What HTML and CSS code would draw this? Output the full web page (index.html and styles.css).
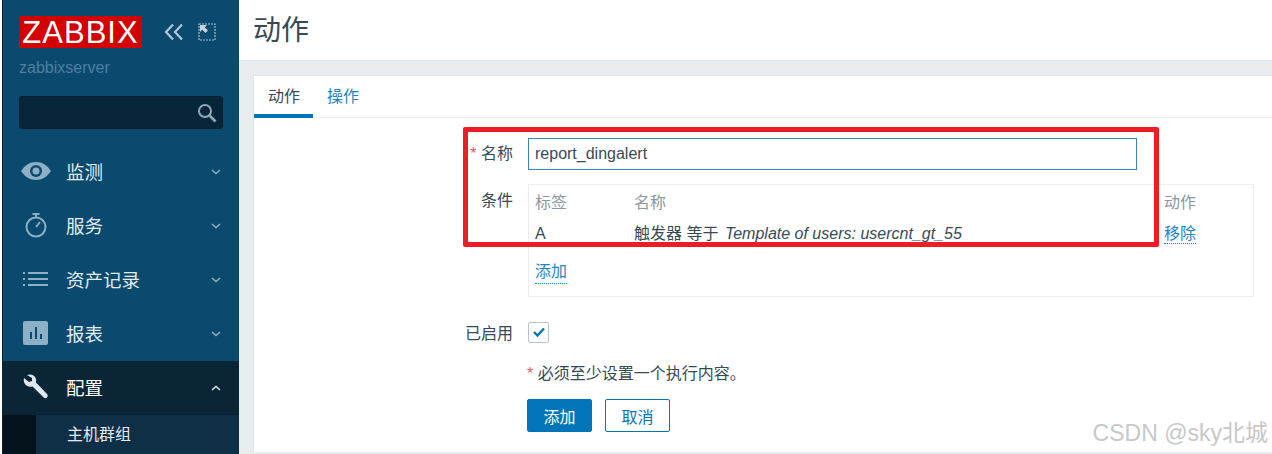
FILE: index.html
```html
<!DOCTYPE html>
<html lang="zh">

<head>
  <meta charset="UTF-8">
  <title>动作</title>
  <link rel="stylesheet" href="styles.css">
</head>

<body>
  <div class="page">
    <aside class="sidebar">
      <div class="logo-row">
        <span class="logo">ZABBIX</span>
        <svg class="collapse" width="20" height="18" viewBox="0 0 20 18"><path d="M9 1.500 2 9l7 7.500M18 1.500 11 9l7 7.500" fill="none" stroke="#b4c6d2" stroke-width="2.200"/></svg>
        <svg class="expand" width="18" height="18" viewBox="0 0 18 18"><path d="M1 1h16v16H1z" fill="none" stroke="#a9bdca" stroke-width="1.200" stroke-dasharray="2 1"/><path d="M2 2h7L6.800 4.200 10 7.500 7.500 10 4.200 6.800 2 9z" fill="#c3d2dc"/></svg>
      </div>
      <div class="server">zabbixserver</div>
      <div class="search">
        <svg width="20" height="20" viewBox="0 0 20 20"><circle cx="8" cy="8" r="6" fill="none" stroke="#8fa9ba" stroke-width="2"/><path d="m12.500 12.500 6 6" stroke="#8fa9ba" stroke-width="2.600"/></svg>
      </div>
      <nav class="menu">
        <div class="menu-item">
          <svg class="menu-icon" width="30" height="20" viewBox="0 0 30 20"><path d="M0 10C4 4 9 1 15 1s11 3 15 9c-4 6-9 9-15 9S4 16 0 10z" fill="#8db0c6"/><circle cx="15" cy="10" r="6" fill="#0a4a6e"/><circle cx="15" cy="10" r="3.500" fill="#8db0c6"/></svg>
          <span>监测</span>
          <svg class="chevron" width="10" height="6" viewBox="0 0 10 6"><path d="m1 1 4 3.500L9 1" fill="none" stroke="#8db0c6" stroke-width="1.500"/></svg>
        </div>
        <div class="menu-item">
          <svg class="menu-icon" width="30" height="26" viewBox="0 0 30 26"><circle cx="15" cy="15" r="9.500" fill="none" stroke="#8db0c6" stroke-width="2"/><path d="M11.500 2h7M15 2v3" stroke="#8db0c6" stroke-width="2"/><path d="m15 15 4-5" stroke="#8db0c6" stroke-width="2"/></svg>
          <span>服务</span>
          <svg class="chevron" width="10" height="6" viewBox="0 0 10 6"><path d="m1 1 4 3.500L9 1" fill="none" stroke="#8db0c6" stroke-width="1.500"/></svg>
        </div>
        <div class="menu-item">
          <svg class="menu-icon" width="30" height="16" viewBox="0 0 30 16"><path d="M2 1h2v2H2zM2 7h2v2H2zM2 13h2v2H2z" fill="#8db0c6"/><path d="M7 2h20M7 8h20M7 14h20" stroke="#8db0c6" stroke-width="2"/></svg>
          <span>资产记录</span>
          <svg class="chevron" width="10" height="6" viewBox="0 0 10 6"><path d="m1 1 4 3.500L9 1" fill="none" stroke="#8db0c6" stroke-width="1.500"/></svg>
        </div>
        <div class="menu-item">
          <svg class="menu-icon" width="30" height="24" viewBox="0 0 30 24"><rect x="2" y="0" width="25" height="24" rx="2" fill="#8db0c6"/><path d="M9 11h2v7H9zM14 6h2v12h-2zM19 13h2v5h-2z" fill="#0a4a6e"/></svg>
          <span>报表</span>
          <svg class="chevron" width="10" height="6" viewBox="0 0 10 6"><path d="m1 1 4 3.500L9 1" fill="none" stroke="#8db0c6" stroke-width="1.500"/></svg>
        </div>
        <div class="menu-item active">
          <svg class="menu-icon" width="30" height="26" viewBox="0 0 30 26"><path d="M3 4 8 8l3-1 0-3-5-3c4-1.500 8 0 9 4 .3 1.200.2 2.300-.2 3.300L26 20c1 1.200 1 2.500 0 3.500s-2.300 1-3.300 0L11.500 12.500c-1 .4-2 .5-3.200.2C4 11.800 2 8 3 4z" fill="#dfe8ee"/></svg>
          <span>配置</span>
          <svg class="chevron" width="10" height="6" viewBox="0 0 10 6"><path d="m1 5 4-3.500L9 5" fill="none" stroke="#dfe8ee" stroke-width="1.500"/></svg>
        </div>
        <div class="submenu">主机群组</div>
      </nav>
    </aside>

    <main class="content">
      <header class="header">
        <h1>动作</h1>
      </header>
      <section class="panel">
        <div class="tabs">
          <a class="tab current">动作</a>
          <a class="tab">操作</a>
        </div>
        <form class="form">
          <div class="row row-name">
            <label class="label"><i class="req">*</i> 名称</label>
            <div class="name-input">report_dingalert</div>
          </div>
          <div class="row row-cond">
            <label class="label">条件</label>
            <div class="cond-box">
              <div class="cond-line cond-head">
                <span class="col-a">标签</span>
                <span class="col-b">名称</span>
                <span class="col-c">动作</span>
              </div>
              <div class="cond-line">
                <span class="col-a col-letter">A</span>
                <span class="col-b">触发器 等于 <em>Template of users: usercnt_gt_55</em></span>
                <span class="col-c"><a class="link">移除</a></span>
              </div>
              <a class="link add-link">添加</a>
            </div>
          </div>
          <div class="row row-enabled">
            <label class="label">已启用</label>
            <span class="checkbox">
              <svg width="14" height="12" viewBox="0 0 14 12"><path d="m2 6 3.500 3.500L12 2.500" fill="none" stroke="#0275b8" stroke-width="2.400"/></svg>
            </span>
          </div>
          <div class="row row-note">
            <p class="note"><i class="req">*</i> 必须至少设置一个执行内容。</p>
          </div>
          <div class="row row-buttons">
            <button type="button" class="btn primary">添加</button>
            <button type="button" class="btn">取消</button>
          </div>
        </form>
        <div class="redbox"></div>
      </section>
      <div class="watermark">CSDN @sky北城</div>
    </main>
  </div>
</body>

</html>
```

FILE: styles.css
```css
* {
  box-sizing: border-box;
}

html,
body {
  margin: 0;
  height: 454px;
  overflow: hidden;
}

body {
  font-family: "Liberation Sans", "Noto Sans CJK SC", sans-serif;
  font-size: 16px;
  color: #384a56;
  background-color: #fff;
}

.page {
  display: flex;
  height: 454px;
  padding-left: 2px;
}

/* sidebar */
.sidebar {
  flex: 0 0 237px;
  height: 454px;
  overflow: hidden;
  background-color: #0a4a6e;
  border-left: 1px solid #10242f;
}

.logo-row {
  display: flex;
  align-items: center;
  padding: 16px 0 0 16px;
}

.logo {
  width: 123px;
  height: 32px;
  line-height: 33px;
  text-align: center;
  font-size: 31px;
  letter-spacing: 1px;
  color: #fff;
  background-color: #d40000;
}

.collapse {
  margin-left: 22px;
}

.expand {
  margin-left: 14px;
}

.server {
  margin: 10px 0 0 16px;
  line-height: 20px;
  font-size: 16px;
  color: #4f7f9e;
}

.search {
  display: flex;
  align-items: center;
  justify-content: flex-end;
  margin: 18px 16px 0 16px;
  height: 33px;
  padding-right: 5px;
  background-color: #08263a;
  border: 1px solid #062031;
  border-radius: 3px;
}

.menu {
  margin-top: 16px;
}

.menu-item {
  display: flex;
  align-items: center;
  height: 54px;
  padding-left: 18px;
  padding-bottom: 2px;
  font-size: 18.500px;
  color: #e3ebf0;
  position: relative;
}

.menu-icon {
  flex: 0 0 30px;
}

.menu-item span {
  margin-left: 15px;
}

.chevron {
  position: absolute;
  right: 18px;
  top: 24px;
}

.menu-item.active {
  background-color: #0a2536;
  color: #fff;
}

.submenu {
  height: 39px;
  padding-left: 31px;
  background-color: #0f2f47;
  border-left: 33px solid #04121c;
  color: #e3ebf0;
  font-size: 16px;
  line-height: 40px;
}

/* main */
.content {
  flex: 1;
  min-width: 0;
  position: relative;
  background-color: #e8ecef;
}

.header {
  height: 61px;
  padding-left: 14px;
  background-color: #fff;
  border-bottom: 1px solid #e0e4e7;
}

.header h1 {
  margin: 0;
  line-height: 62px;
  font-size: 28px;
  font-weight: normal;
  color: #3a4a55;
}

.panel {
  position: relative;
  height: 377px;
  margin: 14px 0 0 14px;
  background-color: #fff;
  border-top: 1px solid #dfe4e7;
  border-left: 1px solid #dfe4e7;
}

.tabs {
  display: flex;
  height: 42px;
  border-bottom: 1px solid #ebeef0;
}

.tab {
  height: 42px;
  padding: 0 13px 0 14px;
  line-height: 42px;
  font-size: 16px;
  white-space: nowrap;
  color: #1f85c2;
}

.tab.current {
  color: #384a56;
  border-bottom: 4px solid #0275b8;
}

.form {
  padding-top: 20px;
}

.row {
  display: flex;
  padding-left: 199px;
}

.label {
  flex: 0 0 60px;
  margin-right: 15px;
  line-height: 32px;
  text-align: right;
  white-space: nowrap;
  font-size: 16px;
}

.req {
  color: #e45959;
  font-style: normal;
}

.name-input {
  width: 609px;
  height: 32px;
  padding-left: 6px;
  line-height: 30px;
  font-size: 16px;
  color: #3a4a55;
  border: 1px solid #3d85b0;
}

.row-cond {
  margin-top: 14px;
}

.row-cond .label {
  padding-top: 1px;
}

.cond-box {
  width: 726px;
  height: 113px;
  padding: 7px 0 0 6px;
  border: 1px solid #ebeef1;
}

.cond-line {
  display: flex;
  height: 31px;
  line-height: 22px;
}

.cond-head {
  color: #8b999f;
}

.col-a {
  flex: 0 0 99px;
}

.col-letter {
  font-size: 16px;
  color: #384a56;
}

.col-b {
  flex: 0 0 530px;
  white-space: nowrap;
}

.col-b em {
  margin-left: 2px;
  font-size: 16px;
}

.col-c {
  white-space: nowrap;
}

.link {
  color: #1f85c2;
  border-bottom: 1px dotted #1f85c2;
  padding-bottom: 1px;
}

.add-link {
  display: inline-block;
  margin-top: 8px;
  line-height: 20px;
}

.row-enabled {
  margin-top: 17px;
  align-items: center;
}

.row-enabled .label {
  padding-top: 4px;
}

.checkbox {
  display: flex;
  align-items: center;
  justify-content: center;
  width: 21px;
  height: 21px;
  border: 1px solid #b9c5cc;
  border-radius: 2px;
}

.row-note {
  padding-left: 273px;
  margin-top: 13px;
}

.note {
  margin: 0;
  line-height: 22px;
  font-size: 16px;
}

.row-buttons {
  padding-left: 273px;
  margin-top: 14px;
  gap: 13px;
}

.btn {
  width: 65px;
  height: 33px;
  padding: 0;
  font: inherit;
  color: #0275b8;
  background-color: #fff;
  border: 1px solid #0275b8;
  border-radius: 2px;
}

.btn.primary {
  color: #fff;
  background-color: #0275b8;
}

/* annotation drawn over the form */
.redbox {
  position: absolute;
  left: 209px;
  top: 51px;
  width: 696px;
  height: 120px;
  border: 5px solid #ee1c25;
  border-radius: 2px;
}

.watermark {
  position: absolute;
  right: 4px;
  bottom: 8px;
  font-size: 23px;
  line-height: 26px;
  color: #c8c8c8;
}
```
